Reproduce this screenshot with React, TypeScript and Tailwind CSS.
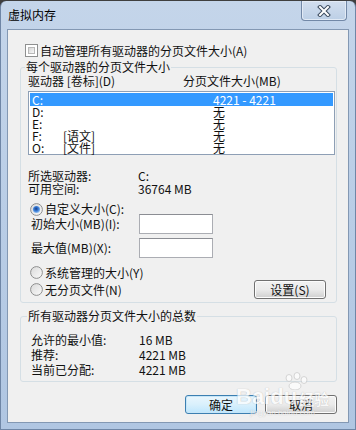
import React from 'react'

const cjk = "font-['Noto_Sans_CJK_SC',sans-serif]"

function Radio({ checked }: { checked?: boolean }) {
  return (
    <svg width="13" height="13" viewBox="0 0 13 13" className="shrink-0">
      <defs>
        <linearGradient id="radioFill" x1="0" y1="0" x2="1" y2="1">
          <stop offset="0" stopColor="#d9d9d9" />
          <stop offset="1" stopColor="#fbfbfb" />
        </linearGradient>
        <radialGradient id="radioDot" cx="0.45" cy="0.4" r="0.6">
          <stop offset="0" stopColor="#153d8a" />
          <stop offset="0.55" stopColor="#3c7fd8" />
          <stop offset="1" stopColor="#9cc6f2" />
        </radialGradient>
      </defs>
      <circle cx="6.5" cy="6.5" r="5.9" fill="url(#radioFill)" stroke="#8e8f8f" strokeWidth="1" />
      {checked && <circle cx="6.5" cy="6.5" r="3.6" fill="url(#radioDot)" />}
    </svg>
  )
}

function Checkbox() {
  return (
    <div className="h-[13px] w-[13px] shrink-0 border border-[#8e8f8f] bg-white p-[2px]">
      <div className="h-full w-full border border-[#b8b8b8] bg-gradient-to-br from-[#d6d6d6] to-[#f7f7f7]" />
    </div>
  )
}

function WinButton({ label, primary }: { label: string; primary?: boolean }) {
  return (
    <div
      className={
        primary
          ? 'flex h-[19px] w-[72px] items-center justify-center rounded-[3px] border border-[#3c7fb1] bg-gradient-to-b from-[#eaf6fd] via-[#d9f0fc] to-[#bee6fd] text-[12px] leading-[12px] shadow-[inset_0_0_0_1px_#c6e6f8]'
          : 'flex h-[19px] w-[72px] items-center justify-center rounded-[3px] border border-[#707070] bg-gradient-to-b from-[#f2f2f2] via-[#ebebeb] to-[#cfcfcf] text-[12px] leading-[12px] shadow-[inset_0_0_0_1px_#fcfcfc]'
      }
    >
      {label}
    </div>
  )
}

const drives = [
  { d: 'C:', label: '', size: '4221 - 4221', selected: true },
  { d: 'D:', label: '', size: '无' },
  { d: 'E:', label: '', size: '无' },
  { d: 'F:', label: '[语文]', size: '无' },
  { d: 'O:', label: '[文件]', size: '无' },
]

export default function App() {
  return (
    <div className={`relative h-[430px] w-[356px] overflow-hidden bg-[#3f3f3f] text-[#111] ${cjk}`}>
      <div className="mt-[1px] flex h-[429px] flex-col rounded-t-[6px] border-x border-b border-[#6f86a6] bg-gradient-to-b from-[#c4d5ea] via-[#b9cde6] to-[#b0c6e2] px-[6px]">
        {/* title bar */}
        <div className="flex h-[28px] shrink-0">
          <div className="mt-[8px] pl-[1px] text-[12px] leading-[12px] text-black">虚拟内存</div>
          <div className="ml-auto mr-[2px] flex h-[20px] w-[46px] items-center justify-center rounded-b-[4px] border border-t-0 border-[#7288a7] bg-gradient-to-b from-[#d3dfef] to-[#bccfe6] shadow-[inset_0_0_0_1px_#e2eaf5]">
            <svg width="14" height="12" viewBox="0 0 14 12">
              <path d="M3 2 L11 10 M11 2 L3 10" stroke="#3b4a5e" strokeWidth="4" strokeLinecap="square" />
              <path d="M3 2 L11 10 M11 2 L3 10" stroke="#ffffff" strokeWidth="2" strokeLinecap="square" />
            </svg>
          </div>
        </div>

        {/* content panel */}
        <div className="flex h-[394px] shrink-0 flex-col border border-[#8398b3] bg-[#f0f0f0] text-[12px] leading-[12px]">
          <div className="ml-[17px] mt-[14px] flex h-[13px] items-center gap-[2px]">
            <Checkbox />
            <span>自动管理所有驱动器的分页文件大小(A)</span>
          </div>

          <fieldset className="ml-[12px] mt-[4px] w-[317px] rounded-[3px] border border-[#d5dfe5] pb-[3px]">
            <legend className="ml-[4px] px-[1px] leading-[12px]">每个驱动器的分页文件大小</legend>
            <div className="mt-[2px] flex pl-[7px]">
              <span className="w-[155px]">驱动器 [卷标](D)</span>
              <span>分页文件大小(MB)</span>
            </div>
            <div className="ml-[7px] mt-[4px] flex h-[64px] w-[307px] flex-col border border-[#8e9fb5] bg-white p-[1px]">
              {drives.map((r) => (
                <div
                  key={r.d}
                  className={
                    r.selected
                      ? 'flex h-[13px] shrink-0 items-center bg-[#3399ff] pl-[2px] text-white'
                      : 'flex h-[12px] shrink-0 items-center pl-[2px]'
                  }
                >
                  <span className="w-[31px]">{r.d}</span>
                  <span className="w-[150px]">{r.label}</span>
                  <span>{r.size}</span>
                </div>
              ))}
            </div>

            <div className="mt-[15px] flex pl-[7px]">
              <span className="w-[110px]">所选驱动器:</span>
              <span>C:</span>
            </div>
            <div className="mt-[1px] flex pl-[7px]">
              <span className="w-[110px]">可用空间:</span>
              <span>36764 MB</span>
            </div>

            <div className="mt-[8px] flex h-[12px] items-center gap-[2px] pl-[9px]">
              <Radio checked />
              <span>自定义大小(C):</span>
            </div>
            <div className="-mt-[1px] flex h-[20px] items-center pl-[10px]">
              <span className="w-[108px]">初始大小(MB)(I):</span>
              <div className="h-[20px] w-[74px] border border-[#abadb3] border-t-[#8b8d93] bg-white" />
            </div>
            <div className="mt-[4px] flex h-[20px] items-center pl-[10px]">
              <span className="w-[108px]">最大值(MB)(X):</span>
              <div className="h-[20px] w-[74px] border border-[#abadb3] border-t-[#8b8d93] bg-white" />
            </div>

            <div className="mt-[8px] flex h-[13px] items-center gap-[2px] pl-[9px]">
              <Radio />
              <span>系统管理的大小(Y)</span>
            </div>
            <div className="mt-[1px] flex h-[19px] items-center pl-[9px] pr-[10px]">
              <Radio />
              <span className="ml-[2px]">无分页文件(N)</span>
              <div className="ml-auto">
                <WinButton label="设置(S)" />
              </div>
            </div>
          </fieldset>

          <fieldset className="ml-[12px] mt-[7px] w-[317px] rounded-[3px] border border-[#d5dfe5] pb-[5px]">
            <legend className="ml-[6px] px-[1px] leading-[12px]">所有驱动器分页文件大小的总数</legend>
            <div className="mt-[12px] flex flex-col gap-[3px] pl-[10px]">
              <div className="flex">
                <span className="w-[108px]">允许的最小值:</span>
                <span>16 MB</span>
              </div>
              <div className="flex">
                <span className="w-[108px]">推荐:</span>
                <span>4221 MB</span>
              </div>
              <div className="flex">
                <span className="w-[108px]">当前已分配:</span>
                <span>4221 MB</span>
              </div>
            </div>
          </fieldset>

          <div className="mt-[13px] flex justify-end gap-[8px] pr-[11px]">
            <WinButton label="确定" primary />
            <WinButton label="取消" />
          </div>
        </div>
      </div>

      {/* Baidu watermark */}
      <div className="pointer-events-none absolute left-[236px] top-[372px] flex flex-col items-center opacity-70">
        <svg width="30" height="18" viewBox="0 0 30 18" className="ml-[24px]">
          <g fill="#ffffff" stroke="#c9c9c9" strokeWidth="1">
            <ellipse cx="9" cy="6" rx="3" ry="3.5" />
            <ellipse cx="17" cy="4" rx="3" ry="3.5" />
            <ellipse cx="24" cy="8" rx="3" ry="3.5" />
            <ellipse cx="15" cy="14" rx="6" ry="4" />
          </g>
        </svg>
        <div className="-mt-[4px] flex items-end font-['Liberation_Sans',sans-serif] text-[22px] font-bold leading-[22px] text-white [text-shadow:0_0_1px_#9a9a9a]">
          <span>Baidu</span>
          <span className={`${cjk} ml-[2px] text-[15px] leading-[18px]`}>经验</span>
        </div>
        <div className="font-['Liberation_Sans',sans-serif] text-[8px] leading-[10px] text-white [text-shadow:0_0_1px_#9a9a9a]">jingyan.baidu.com</div>
      </div>
    </div>
  )
}
